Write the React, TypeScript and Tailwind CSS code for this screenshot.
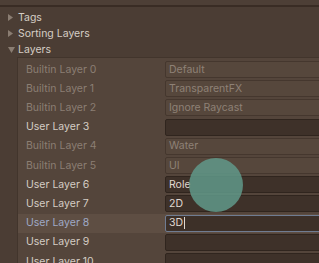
import React from 'react';

interface LayerRow {
  label: string;
  value: string;
  builtin: boolean;
}

const layers: LayerRow[] = [
  { label: 'Builtin Layer 0', value: 'Default', builtin: true },
  { label: 'Builtin Layer 1', value: 'TransparentFX', builtin: true },
  { label: 'Builtin Layer 2', value: 'Ignore Raycast', builtin: true },
  { label: 'User Layer 3', value: '', builtin: false },
  { label: 'Builtin Layer 4', value: 'Water', builtin: true },
  { label: 'Builtin Layer 5', value: 'UI', builtin: true },
  { label: 'User Layer 6', value: 'Role', builtin: false },
  { label: 'User Layer 7', value: '2D', builtin: false },
  { label: 'User Layer 8', value: '3D', builtin: false },
  { label: 'User Layer 9', value: '', builtin: false },
  { label: 'User Layer 10', value: '', builtin: false },
];

const Foldout = ({ label, open }: { label: string; open?: boolean }) => (
  <div className="flex items-center h-4 pl-2">
    {open ? (
      <svg width="8" height="7" viewBox="0 0 8 7" className="mr-[2px]">
        <polygon points="0,0 7,0 3.5,6" fill="#8a7d72" />
      </svg>
    ) : (
      <svg width="8" height="8" viewBox="0 0 8 8" className="mr-[2px]">
        <polygon points="0,0 5,3.5 0,7" fill="#8a7d72" />
      </svg>
    )}
    <span className="text-[#d5cdc5]">{label}</span>
  </div>
);

export default function App() {
  return (
    <div
      className="relative w-[319px] h-[263px] overflow-hidden bg-[#4b3d34] text-[10.5px]"
      style={{ fontFamily: 'Inter, "Noto Sans", sans-serif' }}
    >
      <div className="h-[5px] bg-[#4d3f36]" />
      <div className="h-[2px] bg-[#392c24]" />
      <div className="pt-[3px]">
        <Foldout label="Tags" />
        <Foldout label="Sorting Layers" />
        <Foldout label="Layers" open />
      </div>
      <div className="ml-[17px] -mt-[1px] border-l border-t border-[#42352c] bg-[#54453b] pt-[2px]">
        {layers.map((layer, i) => {
          const selected = layer.label === 'User Layer 8';
          return (
            <div
              key={i}
              className={`flex items-center h-[19.2px] pl-[8px] ${selected ? 'bg-[#5e4e43]' : ''}`}
            >
              <span
                className={`w-[139px] shrink-0 ${
                  selected ? 'text-[#9fa9c6]' : layer.builtin ? 'text-[#8b7e73]' : 'text-[#d5cdc5]'
                }`}
              >
                {layer.label}
              </span>
              <div
                className={`flex items-center h-[17px] w-[170px] shrink-0 rounded-[2px] border px-[3px] ${
                  selected
                    ? 'bg-[#3d3028] border-[#6f7c92]'
                    : layer.builtin
                    ? 'bg-[#56473c] border-[#45372e]'
                    : 'bg-[#3e3129] border-[#30251e]'
                } ${layer.builtin ? 'text-[#8e8176]' : 'text-[#e0d8d0]'}`}
              >
                {layer.value}
                {selected && <span className="ml-[1px] inline-block w-px h-[12px] bg-[#e0d8d0]" />}
              </div>
            </div>
          );
        })}
      </div>
      {/* touch indicator */}
      <div className="absolute left-[189px] top-[158px] w-[54px] h-[54px] rounded-full bg-[#60998a]/85" />
    </div>
  );
}
